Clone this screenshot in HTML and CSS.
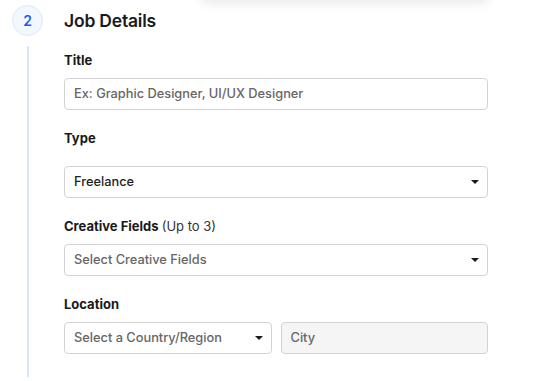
FILE: index.html
```html
<!DOCTYPE html>
<html>
<head>
<meta charset="utf-8">
<link rel="stylesheet" href="styles.css">
</head>
<body>
<div class="card-above"></div>
<div class="step">
  <div class="rail">
    <div class="badge">2</div>
    <div class="line"></div>
  </div>
  <div class="content">
    <h2 class="heading">Job Details</h2>
    <div class="field field-title">
      <label class="label">Title</label>
      <div class="input placeholder">Ex: Graphic Designer, UI/UX Designer</div>
    </div>
    <div class="field field-type">
      <label class="label">Type</label>
      <div class="input select value">Freelance<span class="caret"></span></div>
    </div>
    <div class="field">
      <label class="label">Creative Fields <span class="note">(Up to 3)</span></label>
      <div class="input select placeholder">Select Creative Fields<span class="caret"></span></div>
    </div>
    <div class="field">
      <label class="label">Location</label>
      <div class="row">
        <div class="input select placeholder">Select a Country/Region<span class="caret"></span></div>
        <div class="input disabled placeholder">City</div>
      </div>
    </div>
  </div>
</div>
</body>
</html>
```

FILE: styles.css
```css
* { box-sizing: border-box; }
html, body { margin: 0; padding: 0; background: #fff; }
body {
  font-family: Inter, "Noto Sans", "Liberation Sans", sans-serif;
  color: #1a1a1a;
  width: 554px;
  height: 381px;
  overflow: hidden;
}
.card-above {
  width: 290px;
  height: 40px;
  margin-left: 200px;
  margin-top: -40px;
  border-radius: 8px;
  background: #fff;
  box-shadow: 0 3px 12px rgba(0,0,0,0.09);
}
.step {
  display: flex;
  padding-top: 5px;
}
.rail {
  width: 63px;
  flex: none;
  display: flex;
  flex-direction: column;
  align-items: flex-start;
  padding-left: 12px;
}
.badge {
  width: 31px;
  height: 31px;
  border-radius: 50%;
  background: #f3f7fe;
  border: 1px solid #dde7fb;
  color: #1a5cf0;
  font-size: 14px;
  font-weight: 600;
  display: flex;
  align-items: center;
  justify-content: center;
}
.line {
  width: 2px;
  height: 331px;
  margin-top: 10px;
  margin-left: 15px;
  background: #d9e5fb;
}
.content {
  width: 425px;
  flex: none;
  padding-left: 1px;
}
.heading {
  margin: 0;
  font-size: 17.5px;
  font-weight: 600;
  line-height: 31px;
  color: #1a1a1a;
  letter-spacing: -0.2px;
}
.field { margin-top: 20px; }
.field-title { margin-top: 16px; }
.label {
  display: block;
  font-size: 13px;
  font-weight: 700;
  line-height: 16px;
  color: #1a1a1a;
  margin-bottom: 10px;
}
.field-type .label { margin-bottom: 20px; }
.note { font-weight: 400; color: #333; }
.input {
  position: relative;
  height: 32px;
  border: 1px solid #d2d2d2;
  border-radius: 4px;
  background: #fff;
  font-size: 12.8px;
  font-weight: 500;
  line-height: 30px;
  padding: 0 9px;
  white-space: nowrap;
}
.placeholder { color: #666; }
.value { color: #1f1f1f; }
.disabled { background: #f5f5f5; }
.caret {
  position: absolute;
  right: 8px;
  top: 13px;
  width: 0;
  height: 0;
  border-left: 4px solid transparent;
  border-right: 4px solid transparent;
  border-top: 4px solid #1a1a1a;
}
.row {
  display: flex;
  gap: 9px;
}
.row .input { flex: 1; }
```
